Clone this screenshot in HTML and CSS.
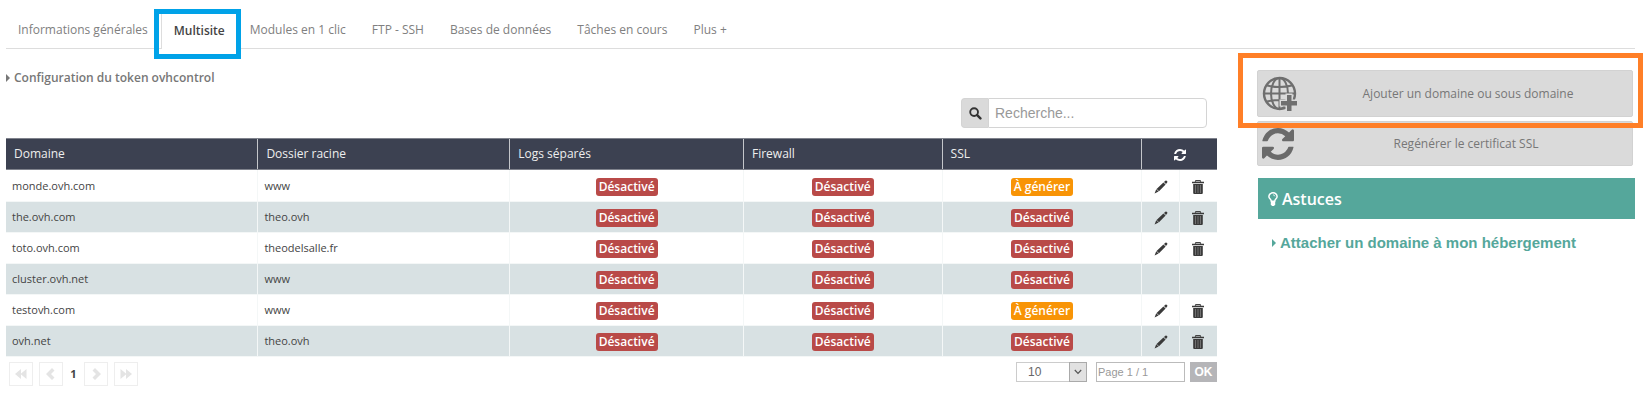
FILE: index.html
```
<!DOCTYPE html>
<html lang="fr">
<head>
<meta charset="utf-8">
<title>Multisite</title>
<link rel="stylesheet" href="styles.css">
</head>
<body>
<svg class="sprite" aria-hidden="true">
  <symbol id="pencil" viewBox="0 0 14 14">
    <path d="M10 2 11.300.7q.9-.6 1.700.2t.2 1.700L12 4zM9.400 2.400 11.600 4.600 5 11.200 2.600 8.900zM2.200 9.300 4.600 11.600.6 13.500z"/>
  </symbol>
  <symbol id="trash" viewBox="0 0 12 14">
    <path d="M3.200 1.700 3.900.6h4.200l.7 1.100" fill="none" stroke="#444" stroke-width="1.200"/>
    <path d="M0 1.700h12v1.500H0zM1.200 4h9.600v9q0 1-1 1H2.200q-1 0-1-1z"/>
    <path d="M3.500 5v8M6 5v8M8.500 5v8" stroke="#8a8a8a" stroke-width=".7"/>
  </symbol>
  <symbol id="refresh" viewBox="0 0 1536 1536">
    <path d="M1511 928q0 5-1 7-64 268-268 434.500T764 1536q-146 0-282.500-55T238 1324l-129 129q-19 19-45 19t-45-19-19-45V960q0-26 19-45t45-19h448q26 0 45 19t19 45-19 45l-137 137q71 66 161 102t187 36q134 0 250-65t186-179q11-17 53-117 8-23 30-23h192q13 0 22.500 9.500t9.500 22.500zm25-800v448q0 26-19 45t-45 19h-448q-26 0-45-19t-19-45 19-45l138-138Q969 256 768 256q-134 0-250 65T332 500q-11 17-53 117-8 23-30 23H50q-13 0-22.500-9.500T18 608v-7q65-268 270-434.500T768 0q146 0 284 55.500T1297 212l130-129q19-19 45-19t45 19 19 45z"/>
  </symbol>
</svg>

<nav class="tabs">
  <a class="tab" href="#infos">Informations générales</a>
  <a class="tab tab-active" href="#multisite" aria-current="page">Multisite<span class="mark mark-tab"></span></a>
  <a class="tab" href="#modules">Modules en 1 clic</a>
  <a class="tab" href="#ftp">FTP - SSH</a>
  <a class="tab" href="#bases">Bases de données</a>
  <a class="tab" href="#taches">Tâches en cours</a>
  <a class="tab" href="#plus">Plus +</a>
</nav>

<div class="layout">
  <main class="main">
    <a class="token" href="#token"><span class="caret"></span>Configuration du token ovhcontrol</a>

    <form class="search">
      <button class="search-btn" type="button" aria-label="Rechercher">
        <svg width="13" height="13" viewBox="0 0 14 14"><circle cx="5.500" cy="5.500" r="4.200" fill="none" stroke="#333" stroke-width="2"/><path d="M8.800 8.800 12.300 12.300" stroke="#333" stroke-width="2.600" stroke-linecap="round"/></svg>
      </button>
      <input class="search-input" type="text" placeholder="Recherche..." aria-label="Recherche">
    </form>

    <table class="grid">
      <colgroup><col class="c-domain"><col class="c-folder"><col class="c-logs"><col class="c-fw"><col class="c-ssl"><col class="c-edit"><col class="c-del"></colgroup>
      <thead>
        <tr><th>Domaine</th><th>Dossier racine</th><th>Logs séparés</th><th>Firewall</th><th>SSL</th><th colspan="2" class="center"><button class="icon-btn light" type="button" aria-label="Actualiser"><svg width="12" height="12"><use href="#refresh"/></svg></button></th></tr>
      </thead>
      <tbody>
        <tr><td>monde.ovh.com</td><td>www</td><td class="center"><span class="badge">Désactivé</span></td><td class="center"><span class="badge">Désactivé</span></td><td class="center"><span class="badge warn">À générer</span></td><td class="center"><button class="icon-btn" type="button" aria-label="Modifier"><svg width="14" height="14"><use href="#pencil"/></svg></button></td><td class="center"><button class="icon-btn" type="button" aria-label="Supprimer"><svg width="12" height="14"><use href="#trash"/></svg></button></td></tr>
        <tr><td>the.ovh.com</td><td>theo.ovh</td><td class="center"><span class="badge">Désactivé</span></td><td class="center"><span class="badge">Désactivé</span></td><td class="center"><span class="badge">Désactivé</span></td><td class="center"><button class="icon-btn" type="button" aria-label="Modifier"><svg width="14" height="14"><use href="#pencil"/></svg></button></td><td class="center"><button class="icon-btn" type="button" aria-label="Supprimer"><svg width="12" height="14"><use href="#trash"/></svg></button></td></tr>
        <tr><td>toto.ovh.com</td><td>theodelsalle.fr</td><td class="center"><span class="badge">Désactivé</span></td><td class="center"><span class="badge">Désactivé</span></td><td class="center"><span class="badge">Désactivé</span></td><td class="center"><button class="icon-btn" type="button" aria-label="Modifier"><svg width="14" height="14"><use href="#pencil"/></svg></button></td><td class="center"><button class="icon-btn" type="button" aria-label="Supprimer"><svg width="12" height="14"><use href="#trash"/></svg></button></td></tr>
        <tr><td>cluster.ovh.net</td><td>www</td><td class="center"><span class="badge">Désactivé</span></td><td class="center"><span class="badge">Désactivé</span></td><td class="center"><span class="badge">Désactivé</span></td><td></td><td></td></tr>
        <tr><td>testovh.com</td><td>www</td><td class="center"><span class="badge">Désactivé</span></td><td class="center"><span class="badge">Désactivé</span></td><td class="center"><span class="badge warn">À générer</span></td><td class="center"><button class="icon-btn" type="button" aria-label="Modifier"><svg width="14" height="14"><use href="#pencil"/></svg></button></td><td class="center"><button class="icon-btn" type="button" aria-label="Supprimer"><svg width="12" height="14"><use href="#trash"/></svg></button></td></tr>
        <tr><td>ovh.net</td><td>theo.ovh</td><td class="center"><span class="badge">Désactivé</span></td><td class="center"><span class="badge">Désactivé</span></td><td class="center"><span class="badge">Désactivé</span></td><td class="center"><button class="icon-btn" type="button" aria-label="Modifier"><svg width="14" height="14"><use href="#pencil"/></svg></button></td><td class="center"><button class="icon-btn" type="button" aria-label="Supprimer"><svg width="12" height="14"><use href="#trash"/></svg></button></td></tr>
      </tbody>
    </table>

    <div class="pager">
      <div class="pages">
        <button class="page-btn" type="button" aria-label="Première page"><svg width="12" height="12" viewBox="0 0 12 12"><path d="M6 1v10L0 6zM11.500 1v10L5.500 6z"/></svg></button>
        <button class="page-btn" type="button" aria-label="Page précédente"><svg width="12" height="12" viewBox="0 0 12 12"><path d="M7 0 9.500 2.500 6 6l3.500 3.500L7 12 1 6z"/></svg></button>
        <span class="page-current">1</span>
        <button class="page-btn" type="button" aria-label="Page suivante"><svg width="12" height="12" viewBox="0 0 12 12"><path d="M5 0 2.500 2.500 6 6 2.500 9.500 5 12l6-6z"/></svg></button>
        <button class="page-btn" type="button" aria-label="Dernière page"><svg width="12" height="12" viewBox="0 0 12 12"><path d="M.5 1v10l6-5zM6 1v10l6-5z"/></svg></button>
      </div>
      <form class="page-tools">
        <span class="select-wrap">
          <select class="page-size" aria-label="Résultats par page"><option>10</option><option>25</option></select>
          <span class="select-arrow"><svg width="8" height="6" viewBox="0 0 8 6"><path d="M.8 1 4 4.400 7.200 1" fill="none" stroke="#555" stroke-width="1.200"/></svg></span>
        </span>
        <input class="page-input" type="text" placeholder="Page 1 / 1" aria-label="Page">
        <button class="page-ok" type="button">OK</button>
      </form>
    </div>
  </main>

  <aside class="side">
    <div class="actions">
      <button class="action" type="button">
        <svg class="action-icon" width="36" height="36" viewBox="0 0 36 36">
          <g fill="none" stroke="#6f6f6f" stroke-width="2"><circle cx="17.500" cy="17.500" r="15.500" stroke-width="2.400"/><ellipse cx="17.500" cy="17.500" rx="8.500" ry="15.500"/><path d="M17.500 2v31M2 17.500h31M5 9.500q12.500 3 25 0M5 25.500q12.500-3 25 0"/></g>
          <path d="M23.500 17.500h7v6H36v7h-5.500V36h-7v-5.500h-6v-7h6z" fill="#dadada"/>
          <path d="M25 19h4.500v6H35v4.500h-5.500V35H25v-5.500h-6V25h6z" fill="#6f6f6f"/>
        </svg>
        <span class="action-label">Ajouter un domaine ou sous domaine</span>
        <span class="mark mark-action"></span>
      </button>
      <button class="action action-compact" type="button">
        <svg class="action-icon" width="32" height="32" fill="#6a6a6a"><use href="#refresh"/></svg>
        <span class="action-label">Regénérer le certificat SSL</span>
      </button>
    </div>
    <h2 class="tips">
      <svg width="10" height="14" viewBox="0 0 10 14"><path d="M3.300 9.300Q3.200 8 2 6.800.9 5.800.9 4.400.9 2.800 2.100 1.800T5 .8t2.900 1 1.200 2.600q0 1.400-1.100 2.400-1.200 1.200-1.300 2.500z" fill="none" stroke="#fff" stroke-width="1.500"/><path d="M2.800 9.500h4.400v3L6 14H4l-1.200-1.500z" fill="#fff"/><path d="M5 2.800q1.700.1 1.900 1.600" fill="none" stroke="#fff" stroke-width=".8"/></svg>
      Astuces
    </h2>
    <a class="tip-link" href="#attacher"><span class="caret"></span>Attacher un domaine à mon hébergement</a>
  </aside>
</div>
</body>
</html>
```
FILE: styles.css
```
* { box-sizing: border-box; }
body {
  margin: 0;
  padding: 12px 8px 0 6px;
  background: #fff;
  color: #444;
  font: 12px/20px "Open Sans", "Noto Sans", sans-serif;
}
a { color: inherit; text-decoration: none; }
button, input, select { font: inherit; color: inherit; margin: 0; }
button { cursor: pointer; }
.sprite { position: absolute; width: 0; height: 0; }

.tabs {
  display: flex;
  height: 37px;
  border-bottom: 1px solid #ddd;
  color: #808080;
}
.tab { padding: 8px 12px; border: 0 solid transparent; border-width: 0 1px; white-space: nowrap; }
.tab:first-child { padding-left: 11px; }
.tab-active {
  position: relative;
  height: 37px;
  padding: 9px 11px 8px 12px;
  background: #fff;
  border-color: #ddd;
  color: #444;
  font-weight: 600;
}
.mark { position: absolute; z-index: 2; pointer-events: none; }
.mark-tab { inset: -3px -5px -10px -8px; border: 5px solid #00a2e8; }
.mark-action { inset: -18px -11px -12px -20px; border: 5px solid #ff7f27; }

.layout { display: flex; gap: 40px; }
.main { flex: 1; min-width: 0; padding-top: 19px; }
.caret {
  flex: none;
  border: 4px solid transparent;
  border-left-color: currentColor;
  border-right: 0;
  margin-right: 4px;
}
.token { display: flex; align-items: center; color: #777; font-weight: 600; }

.search { display: flex; width: 246px; height: 30px; margin: 10px 10px 10px auto; }
.search-btn {
  width: 27px;
  padding: 0;
  border: 1px solid #d4d4d4;
  border-right: 0;
  border-radius: 4px 0 0 4px;
  background: #dadada;
  display: grid;
  place-items: center;
}
.search-input {
  flex: 1;
  min-width: 0;
  padding: 0 6px;
  border: 1px solid #d4d4d4;
  border-radius: 0 4px 4px 0;
  font: 14px "Liberation Sans", sans-serif;
}
::placeholder { color: #999; opacity: 1; }

.grid { width: 100%; table-layout: fixed; border-collapse: collapse; }
.c-domain, .c-folder { width: 20.8%; }
.c-logs { width: 19.3%; }
.c-fw { width: 16.4%; }
.c-ssl { width: 16.5%; }
.c-edit, .c-del { width: 3.1%; }
.grid th {
  height: 31px;
  padding: 0 8px;
  background: #3c4151;
  border: 1px solid #7f828c;
  border-width: 1px 0;
  color: #eee;
  font-weight: 400;
  text-align: left;
}
.grid th + th { border-left: 1px solid #c4c6ca; }
.grid td { height: 31px; padding: 0 6px; border-bottom: 1px solid #f4f7f7; font-size: 11px; }
.grid td + td { border-left: 1px solid #f4f7f7; }
.grid tbody tr:first-child td { height: 32px; }
.grid tbody tr:nth-child(even) { background: #d8e1e3; }
.grid .center { text-align: center; }
.badge {
  display: inline-block;
  min-width: 62px;
  padding: 0 3px;
  border-radius: 3px;
  background: #b94a48;
  color: #fff;
  font-size: 12px;
  font-weight: 600;
  line-height: 18px;
  vertical-align: middle;
  white-space: nowrap;
}
.warn { background: #f89406; }
.icon-btn { padding: 0; border: 0; background: none; vertical-align: middle; line-height: 0; fill: #3a3a3a; }
.light { fill: #fff; }

.pager { display: flex; justify-content: space-between; padding: 5px 0 0 3px; }
.pages { display: flex; align-items: center; gap: 6px; }
.page-btn {
  width: 24px;
  height: 24px;
  padding: 0;
  border: 1px solid #eee;
  background: #fff;
  display: grid;
  place-items: center;
  fill: #e4e4e4;
}
.page-current { width: 9px; text-align: center; font-size: 11px; font-weight: 700; }
.page-tools { display: flex; color: #666; font: 12px "Liberation Sans", sans-serif; }
.select-wrap { display: flex; position: relative; width: 71px; height: 20px; margin-right: 9px; }
.page-size { width: 100%; appearance: none; padding: 0 11px; border: 1px solid #ccc; border-radius: 0; background: #fff; }
.select-arrow {
  position: absolute;
  top: 0;
  right: 0;
  width: 18px;
  height: 20px;
  border: 1px solid #aaa;
  background: #e1e1e1;
  display: grid;
  place-items: center;
  pointer-events: none;
}
.page-input { width: 89px; height: 20px; margin-right: 5px; padding: 0 1px; border: 1px solid #bbb; font-size: 11px; }
.page-ok { width: 27px; height: 20px; padding: 0; border: 0; background: #b5b5b8; color: #fff; font-weight: 700; }

.side { flex: 0 0 378px; padding-top: 21px; }
.actions { display: grid; gap: 4px; margin-right: 2px; }
.action {
  position: relative;
  display: flex;
  align-items: center;
  height: 47px;
  padding: 0 0 0 4px;
  border: 1px solid #d2d2d2;
  border-radius: 2px;
  background: #dadada;
  color: #777;
}
.action-compact { height: 45px; }
.action-icon { flex: none; }
.action-label { flex: 1; padding-left: 6px; text-align: center; }
.tips {
  display: flex;
  align-items: center;
  gap: 4px;
  height: 41px;
  margin: 12px 0 0 1px;
  padding: 0 10px;
  background: #55a79b;
  color: #fff;
  font-size: 16px;
  font-weight: 600;
}
.tip-link {
  display: flex;
  align-items: center;
  margin: 14px 0 0 15px;
  color: #55a79b;
  font: 700 15px/20px "Liberation Sans", sans-serif;
}
```
